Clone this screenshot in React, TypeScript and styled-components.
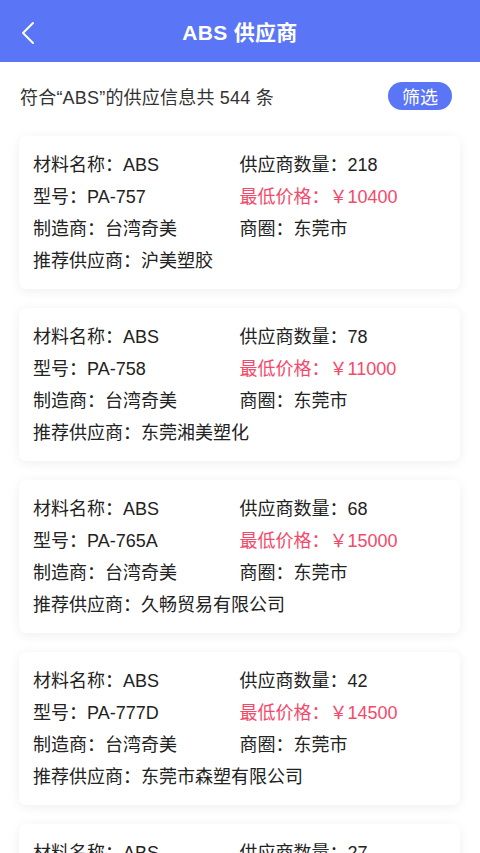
import React from 'react';
import styled, { createGlobalStyle } from 'styled-components';

const GlobalStyle = createGlobalStyle`
  html, body {
    margin: 0;
    padding: 0;
    background: #ffffff;
    font-family: "Liberation Sans", "Noto Sans CJK SC", sans-serif;
  }
  * {
    box-sizing: border-box;
  }
`;

const Page = styled.div`
  display: flex;
  flex-direction: column;
  width: 480px;
  min-height: 853px;
  background: #ffffff;
`;

const Header = styled.header`
  display: flex;
  align-items: center;
  justify-content: center;
  position: relative;
  height: 62px;
  background: #5a76f6;
`;

const BackButton = styled.button`
  position: absolute;
  left: 14px;
  top: 17px;
  width: 28px;
  height: 32px;
  padding: 0;
  border: none;
  background: transparent;
  display: flex;
  align-items: center;
  justify-content: center;
  cursor: pointer;
`;

const Title = styled.h1`
  margin: 0;
  font-size: 21px;
  font-weight: 600;
  color: #ffffff;
  letter-spacing: 0.3px;
`;

const Summary = styled.div`
  display: flex;
  align-items: center;
  justify-content: space-between;
  padding: 20px 28px 0 20px;
`;

const SummaryText = styled.span`
  font-size: 18px;
  color: #333333;
  letter-spacing: 0.2px;
`;

const FilterButton = styled.button`
  width: 64px;
  height: 28px;
  border: none;
  border-radius: 14px;
  background: #5a76f6;
  color: #ffffff;
  font-family: inherit;
  font-size: 18px;
  padding: 0;
  cursor: pointer;
`;

const List = styled.div`
  display: flex;
  flex-direction: column;
  gap: 19px;
  padding: 26px 20px 20px 19px;
`;

const Card = styled.div`
  display: grid;
  grid-template-columns: 1fr 1fr;
  padding: 13px 14px 12px;
  border-radius: 7px;
  background: #ffffff;
  box-shadow: 0 2px 12px rgba(0, 0, 0, 0.07);
`;

const Field = styled.div<{ $highlight?: boolean; $wide?: boolean }>`
  grid-column: ${(p) => (p.$wide ? '1 / span 2' : 'auto')};
  height: 32px;
  line-height: 32px;
  font-size: 18px;
  white-space: nowrap;
  color: ${(p) => (p.$highlight ? '#f5496b' : '#222222')};
`;

type Supply = {
  model: string;
  count: number;
  price: number;
  maker: string;
  area: string;
  supplier: string;
};

const supplies: Supply[] = [
  { model: 'PA-757', count: 218, price: 10400, maker: '台湾奇美', area: '东莞市', supplier: '沪美塑胶' },
  { model: 'PA-758', count: 78, price: 11000, maker: '台湾奇美', area: '东莞市', supplier: '东莞湘美塑化' },
  { model: 'PA-765A', count: 68, price: 15000, maker: '台湾奇美', area: '东莞市', supplier: '久畅贸易有限公司' },
  { model: 'PA-777D', count: 42, price: 14500, maker: '台湾奇美', area: '东莞市', supplier: '东莞市森塑有限公司' },
  { model: 'PA-747', count: 27, price: 13800, maker: '台湾奇美', area: '东莞市', supplier: '东莞市塑胶原料行' },
];

const App: React.FC = () => {
  return (
    <Page>
      <GlobalStyle />
      <Header>
        <BackButton aria-label="返回">
          <svg width="14" height="24" viewBox="0 0 14 24" fill="none">
            <path d="M12 2 L2 12 L12 22" stroke="#ffffff" strokeWidth="2" strokeLinecap="round" strokeLinejoin="round" />
          </svg>
        </BackButton>
        <Title>ABS 供应商</Title>
      </Header>
      <Summary>
        <SummaryText>符合“ABS”的供应信息共 544 条</SummaryText>
        <FilterButton>筛选</FilterButton>
      </Summary>
      <List>
        {supplies.map((s) => (
          <Card key={s.model}>
            <Field>材料名称：ABS</Field>
            <Field>供应商数量：{s.count}</Field>
            <Field>型号：{s.model}</Field>
            <Field $highlight>最低价格：￥{s.price}</Field>
            <Field>制造商：{s.maker}</Field>
            <Field>商圈：{s.area}</Field>
            <Field $wide>推荐供应商：{s.supplier}</Field>
          </Card>
        ))}
      </List>
    </Page>
  );
};

export default App;
